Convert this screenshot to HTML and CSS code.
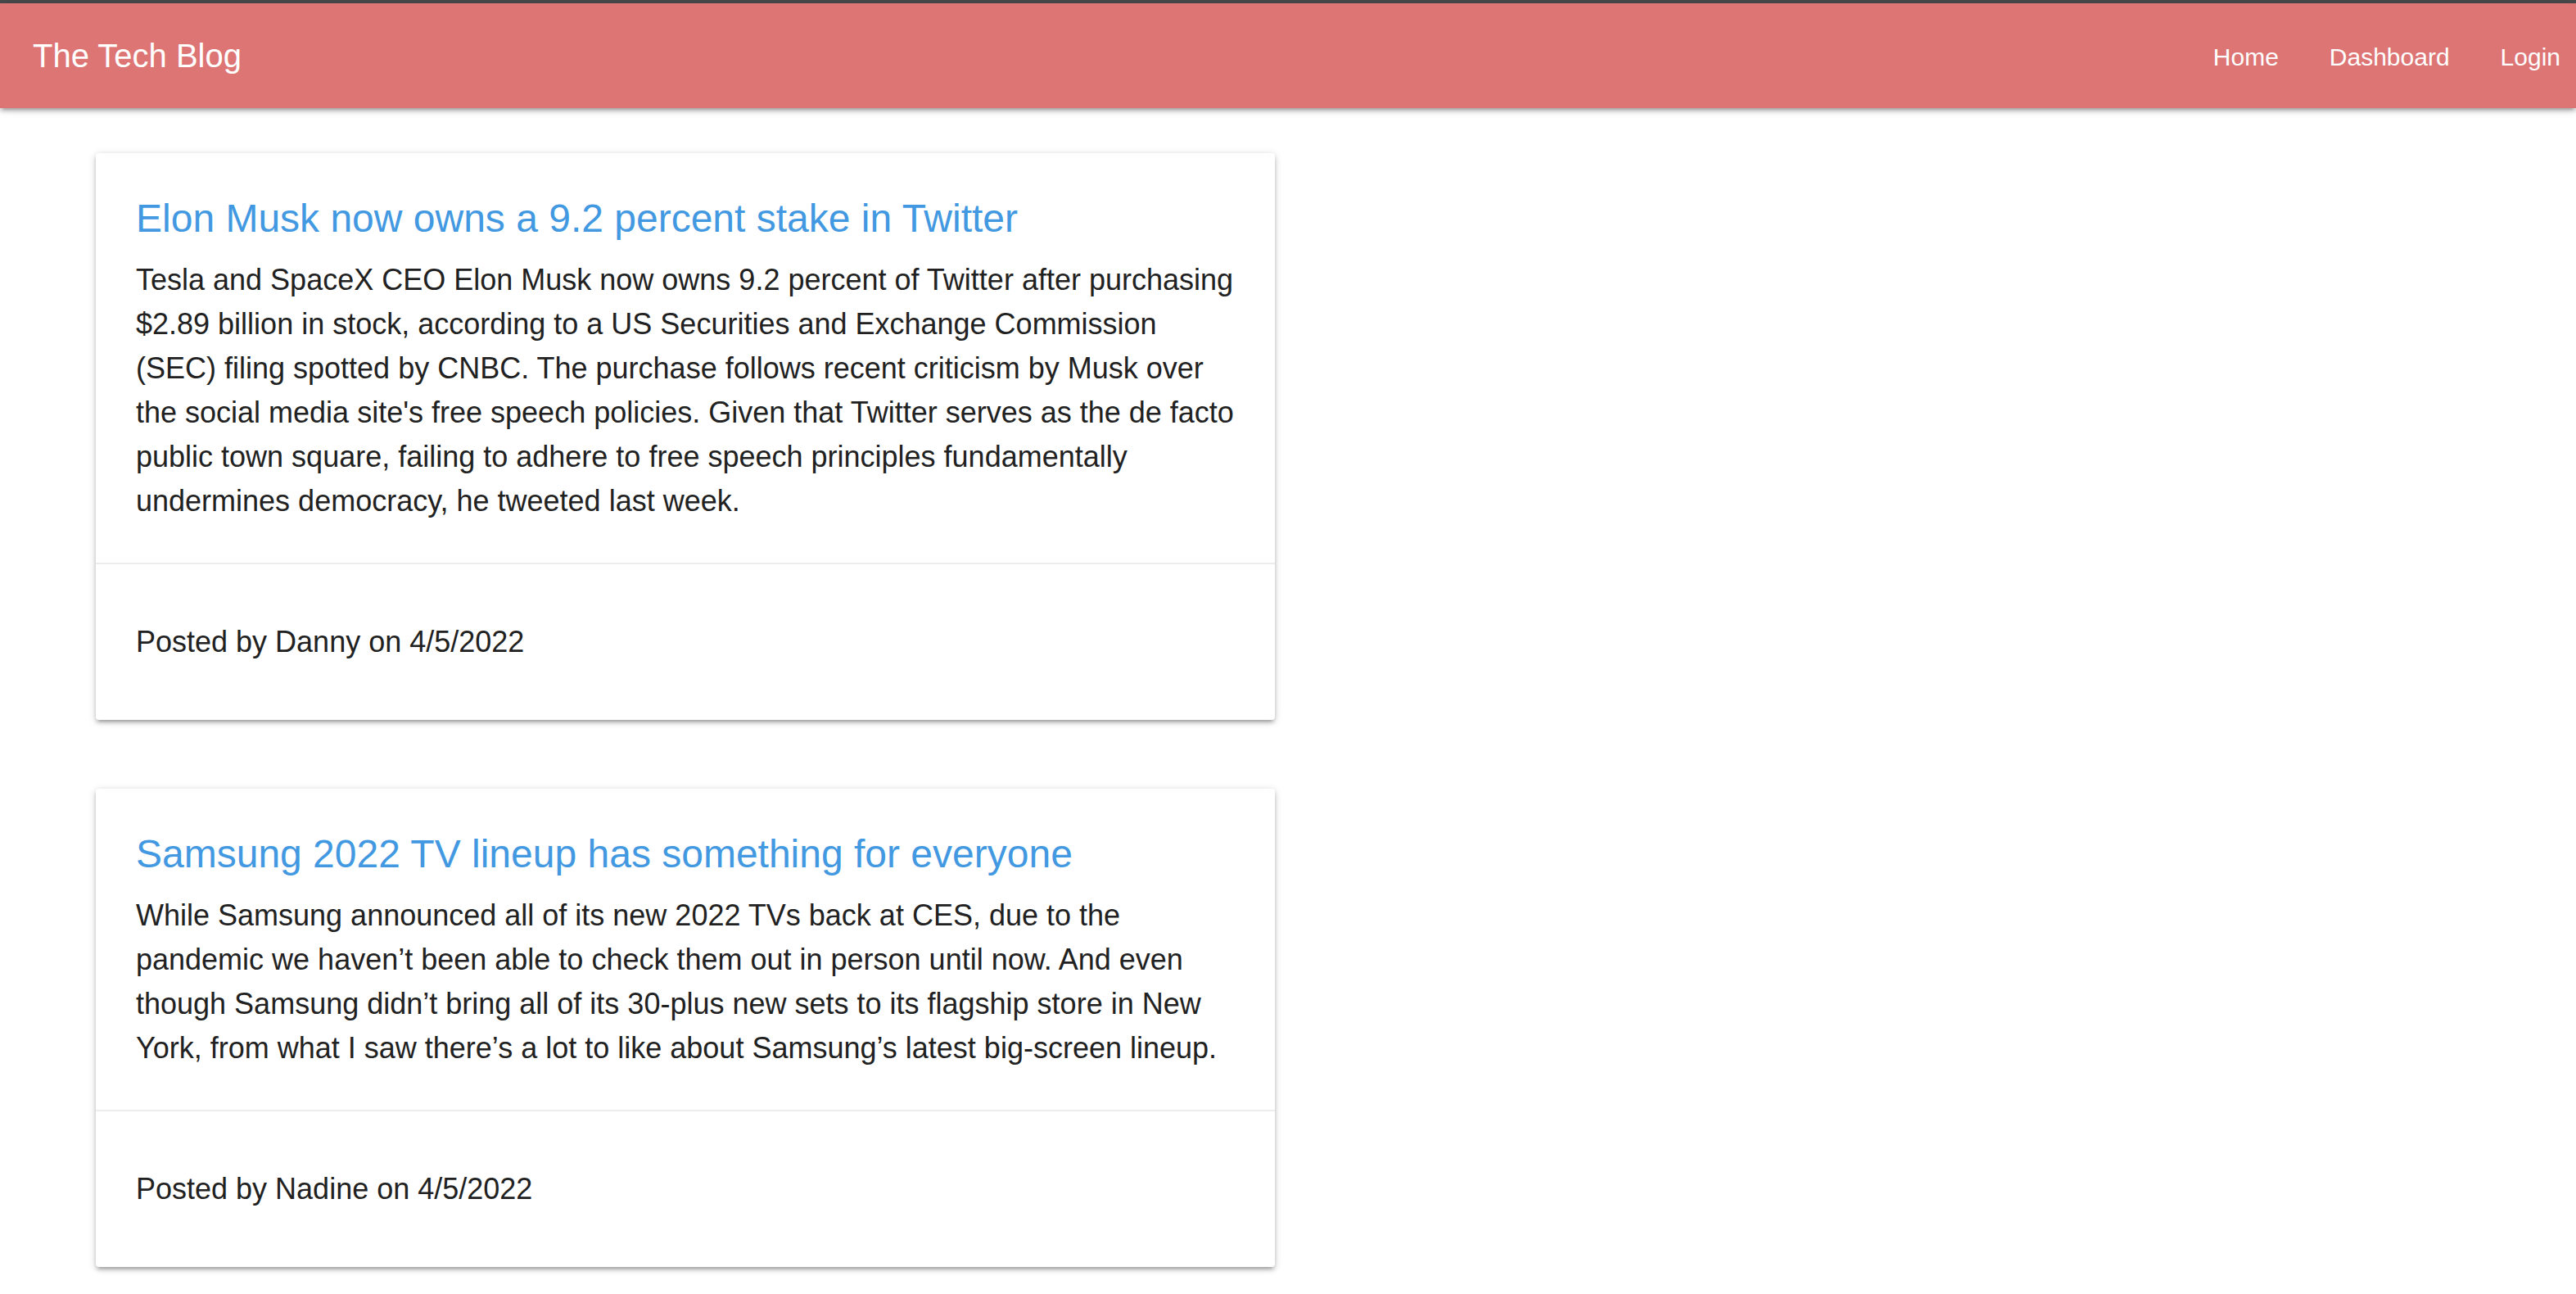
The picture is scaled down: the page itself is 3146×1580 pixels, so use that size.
FILE: index.html
```html
<!DOCTYPE html>
<html lang="en">
<head>
<meta charset="utf-8">
<title>The Tech Blog</title>
<link rel="stylesheet" href="styles.css">
</head>
<body>
<div class="topline"></div>
<nav class="navbar">
  <a class="brand" href="#">The Tech Blog</a>
  <ul class="nav-links">
    <li><a href="#">Home</a></li>
    <li><a href="#">Dashboard</a></li>
    <li><a href="#">Login</a></li>
  </ul>
</nav>
<main class="posts">
  <article class="card">
    <div class="card-content">
      <h2 class="card-title">Elon Musk now owns a 9.2 percent stake in Twitter</h2>
      <p>Tesla and SpaceX CEO Elon Musk now owns 9.2 percent of Twitter after purchasing $2.89 billion in stock, according to a US Securities and Exchange Commission (SEC) filing spotted by CNBC. The purchase follows recent criticism by Musk over the social media site's free speech policies. Given that Twitter serves as the de facto public town square, failing to adhere to free speech principles fundamentally undermines democracy, he tweeted last week.</p>
    </div>
    <div class="card-action">
      <p>Posted by Danny on 4/5/2022</p>
    </div>
  </article>
  <article class="card">
    <div class="card-content">
      <h2 class="card-title">Samsung 2022 TV lineup has something for everyone</h2>
      <p>While Samsung announced all of its new 2022 TVs back at CES, due to the pandemic we haven’t been able to check them out in person until now. And even though Samsung didn’t bring all of its 30-plus new sets to its flagship store in New York, from what I saw there’s a lot to like about Samsung’s latest big-screen lineup.</p>
    </div>
    <div class="card-action">
      <p>Posted by Nadine on 4/5/2022</p>
    </div>
  </article>
</main>
</body>
</html>
```
FILE: styles.css
```css
html, body {
  margin: 0;
  padding: 0;
}
body {
  font-family: "Liberation Sans", Arial, Helvetica, sans-serif;
  color: #212121;
  background: #ffffff;
  font-size: 36px;
  line-height: 1.5;
}
.topline {
  height: 4px;
  background: #48494b;
}
.navbar {
  height: 128px;
  background: #de7575;
  display: flex;
  align-items: center;
  justify-content: space-between;
  padding: 0 19px 0 40px;
  box-shadow: 0 4px 4px 0 rgba(0,0,0,0.14), 0 6px 2px -4px rgba(0,0,0,0.12), 0 2px 10px 0 rgba(0,0,0,0.2);
  position: relative;
  z-index: 1;
}
.brand {
  color: #fff;
  text-decoration: none;
  font-size: 40px;
  line-height: 1;
}
.nav-links {
  list-style: none;
  margin: 0;
  padding: 0;
  display: flex;
  gap: 62px;
}
.nav-links a {
  color: #fff;
  text-decoration: none;
  font-size: 30px;
}
.posts {
  padding: 55px 0 40px 117px;
  display: flex;
  flex-direction: column;
  gap: 84px;
}
.card {
  width: 1440px;
  background: #fff;
  border-radius: 4px;
  box-shadow: 0 4px 4px 0 rgba(0,0,0,0.14), 0 6px 2px -4px rgba(0,0,0,0.12), 0 2px 10px 0 rgba(0,0,0,0.2);
}
.card-content {
  padding: 48px 40px 48px 49px;
}
.card-title {
  margin: 0 0 16px;
  font-weight: 400;
  font-size: 48px;
  line-height: 64px;
  color: #4299e1;
}
.card-content p {
  margin: 0;
  line-height: 54px;
}
.card-action {
  border-top: 2px solid rgba(160,160,160,0.2);
  padding: 32px 48px 32px 49px;
}
.card-action p {
  margin: 36px 0;
  line-height: 54px;
}
```
